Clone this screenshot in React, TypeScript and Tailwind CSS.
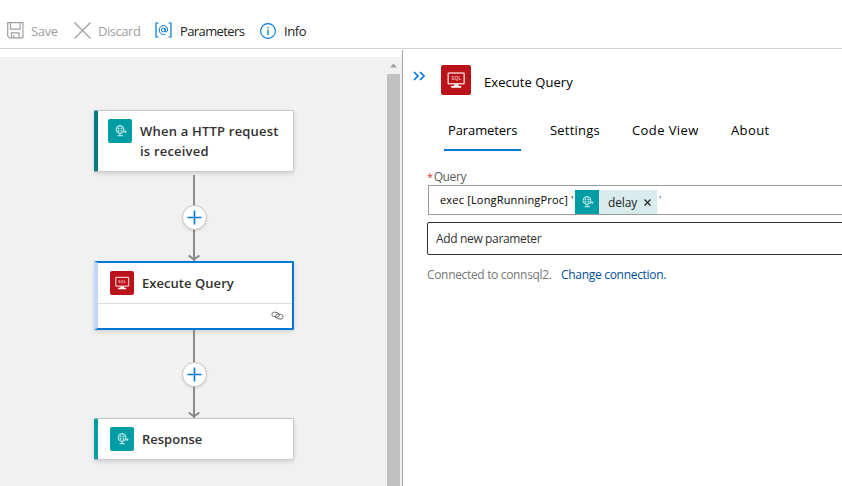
import React from "react";

function HttpIcon({ className }: { className: string }) {
  return (
    <span className={`flex shrink-0 items-center justify-center bg-[#009da5] ${className}`}>
      <svg width="24" height="24" viewBox="0 0 24 24" fill="none" stroke="#fff" strokeOpacity=".8">
        <circle cx="12" cy="10.500" r="4" strokeWidth=".9" />
        <ellipse cx="12" cy="10.500" rx="1.800" ry="4" strokeWidth=".6" />
        <path d="M8 9.300h8M8 11.800h8" strokeWidth=".6" />
        <path d="M15.500 12.700h3M17.300 11.600v2.200M12 14.500v2M9.500 16.700h5.500" strokeWidth="1.100" />
      </svg>
    </span>
  );
}

function SqlIcon({ className, size }: { className: string; size: number }) {
  return (
    <span className={`flex shrink-0 items-center justify-center rounded-[2px] bg-[#ba141a] ${className}`}>
      <svg width={size} height={size} viewBox="0 0 30 30">
        <rect x="7.200" y="8" width="16" height="10.800" rx=".8" fill="none" stroke="#f3c4c6" strokeWidth="1.500" />
        <path d="M13 19.300h4.500v1.700h2.700v1.700h-10v-1.700h2.800z" fill="#fff" />
        <text x="15.200" y="15.200" fontSize="5" fontWeight="700" textAnchor="middle" fill="#eea5a8" fontFamily="Open Sans, sans-serif">SQL</text>
      </svg>
    </span>
  );
}

function Connector({ className, buttonClassName }: { className: string; buttonClassName: string }) {
  return (
    <div className={`relative flex w-[200px] flex-col items-center ${className}`}>
      <div className="w-[2px] grow bg-[#8a8a88]" />
      <svg className="absolute bottom-0 left-[94px]" width="12" height="7" viewBox="0 0 12 7" fill="none" stroke="#8a8a88" strokeWidth="2">
        <path d="M.6 1.500l5.400 4 5.400-4" />
      </svg>
      <span className={`absolute left-[88px] flex size-[25px] items-center justify-center rounded-full border border-[#c8c8c8] bg-white shadow-[0_1px_3px_rgba(0,0,0,0.13)] ${buttonClassName}`}>
        <svg width="15" height="15" viewBox="0 0 15 15" stroke="#0078d4" strokeWidth="1.600">
          <path d="M7.500 .5v14M.5 7.500h14" />
        </svg>
      </span>
    </div>
  );
}

const cardShadow = "shadow-[0_2px_4px_rgba(0,0,0,0.13)]";

export default function App() {
  return (
    <div className="flex h-[486px] w-[842px] flex-col overflow-hidden bg-white font-['Open_Sans','Noto_Sans',sans-serif] text-[13px] whitespace-nowrap text-[#222]">
      <header className="flex h-[49px] shrink-0 items-center border-b border-[#d3d3d3] pt-[13px] pl-[7px]">
        <div className="flex w-[67px] items-center gap-[7px] text-[#a19f9d]">
          <svg width="17" height="17" viewBox="0 0 17 17" fill="none" stroke="currentColor" strokeWidth="1.200">
            <path d="M.7.7h15.200v15.200H2.500L.7 14zM3.500.7v6.500h9.600V.7M4.500 15.900v-5h7.500v5M7 13v3" />
          </svg>
          <span className="pt-[2px] tracking-[-0.35px]">Save</span>
        </div>
        <div className="flex w-[81px] items-center gap-[7px] text-[#a19f9d]">
          <svg width="17" height="17" viewBox="0 0 17 17" stroke="currentColor" strokeWidth="1.200">
            <path d="M.5.5l16 16M16.500.5l-16 16" />
          </svg>
          <span className="pt-[2px] tracking-[-0.45px]">Discard</span>
        </div>
        <div className="flex w-[105px] items-center gap-[8px]">
          <svg width="17" height="17" viewBox="0 0 17 17" fill="none" stroke="#0078d4">
            <path d="M3.500 1H1v14h2.500M13.500 1H16v14h-2.500" strokeWidth="1.200" />
            <circle cx="8.300" cy="8" r="1.900" />
            <path d="M10.300 5.800v3.400c0 1.400 2.300 1 2.300-1.400C12.600 5.300 10.800 3.500 8.500 3.500S4.200 5.500 4.200 8s1.800 4.500 4.300 4.500c.8 0 1.500-.2 2-.5" />
          </svg>
          <span className="pt-[2px] tracking-[-0.6px]">Parameters</span>
        </div>
        <div className="flex items-center gap-[8px]">
          <svg width="16" height="16" viewBox="0 0 16 16" fill="none" stroke="#0078d4">
            <circle cx="8" cy="8" r="7.400" strokeWidth="1.100" />
            <path d="M8 6.500v5.500M8 4v1.300" strokeWidth="1.300" />
          </svg>
          <span className="pt-[2px] tracking-[-0.4px]">Info</span>
        </div>
      </header>

      <div className="flex min-h-0 grow">
        <section className="mt-[8px] flex w-[402px] shrink-0 bg-[#f1f1f1]">
          <div className="flex w-[387px] flex-col pt-[53px] pl-[94px] text-[13px] font-semibold text-[#323130]">
            <div className={`flex h-[62px] w-[200px] shrink-0 rounded-[2px] border border-l-4 border-[#c8c8c8] border-l-[#007c84] bg-white pt-[8px] pl-[10px] ${cardShadow}`}>
              <HttpIcon className="size-[24px] rounded-[2px]" />
              <p className="mt-[2px] ml-[8px] leading-[20px] tracking-[0.2px]">When a HTTP request<br />is received</p>
            </div>
            <Connector className="h-[89px] pt-[3px]" buttonClassName="top-[33px]" />
            <div className={`flex h-[69px] w-[200px] shrink-0 flex-col rounded-[2px] border-2 border-l-4 border-[#0078d4] border-l-[#c3d5fc] bg-white ${cardShadow}`}>
              <div className="flex h-[41px] items-center border-b border-[#dcdcdc] pl-[12px]">
                <SqlIcon className="size-[24px]" size={24} />
                <span className="ml-[8px] pt-[2px] tracking-[0.05px]">Execute Query</span>
              </div>
              <div className="flex grow items-center justify-end pr-[8px]">
                <svg width="13" height="10" viewBox="0 0 13 10" fill="none" stroke="#666" strokeWidth=".9">
                  <rect x=".8" y="1.300" width="7.400" height="4.600" rx="2.300" transform="rotate(12 4 4)" />
                  <rect x="4.600" y="3.400" width="7.400" height="4.600" rx="2.300" transform="rotate(12 9 6)" />
                </svg>
              </div>
            </div>
            <Connector className="h-[88px]" buttonClassName="top-[32px]" />
            <div className={`flex h-[42px] w-[200px] shrink-0 items-center rounded-[2px] border border-l-4 border-[#c8c8c8] border-l-[#009da5] bg-white pl-[12px] ${cardShadow}`}>
              <HttpIcon className="size-[24px] rounded-[2px]" />
              <span className="ml-[8px] pt-[2px]">Response</span>
            </div>
          </div>
          <div className="flex w-[13px] flex-col items-center">
            <svg className="my-[6px] shrink-0" width="7" height="5" viewBox="0 0 7 5"><path d="M0 4.500L3.500.5 7 4.500z" fill="#a0a0a0" /></svg>
            <div className="w-full grow bg-[#c1c1c1]" />
          </div>
        </section>

        <section className="mt-px flex w-[440px] flex-col border-l border-[#a6a6a6] text-black">
          <div className="flex h-[60px] shrink-0 pl-[10px]">
            <svg className="mt-[21px]" width="13" height="10" viewBox="0 0 13 10" fill="none" stroke="#0078d4" strokeWidth="1.700">
              <path d="M1 1l4 4-4 4M7 1l4 4-4 4" />
            </svg>
            <SqlIcon className="mt-[15px] ml-[15px] size-[30px]" size={30} />
            <h1 className="mt-[22px] ml-[13px] leading-[20px] tracking-[0.05px]">Execute Query</h1>
          </div>
          <nav className="flex h-[41px] shrink-0 pt-[10px] pl-[41px] leading-[20px]">
            <div className="h-[31px] w-[77px] border-b-2 border-[#0078d4] pl-[4px] tracking-[-0.1px]">Parameters</div>
            <div className="ml-[29px] w-[82px] tracking-[0.2px]">Settings</div>
            <div className="w-[99px] tracking-[0.4px]">Code View</div>
            <div className="tracking-[0.4px]">About</div>
          </nav>
          <div className="flex grow flex-col pt-[18px] pl-[24px] text-[12px]">
            <label className="h-[16px] leading-[16px] tracking-[-0.4px] text-[#605e5c]"><span className="mr-[1px] text-[11px] text-[#d13438]">*</span>Query</label>
            <div className="ml-px flex h-[30px] w-[430px] border border-[#999] pt-[4px] pl-[11px] text-[11px]">
              <span className="w-[135px] leading-[20px] tracking-[0.18px]">exec [LongRunningProc] '</span>
              <span className="flex h-[24px] w-[82px] items-center bg-[#daebed]">
                <HttpIcon className="size-[24px]" />
                <span className="ml-[9px] w-[36px] pt-[2px] text-[12px] tracking-[-0.15px] text-[#222]">delay</span>
                <svg width="7" height="7" viewBox="0 0 7 7" stroke="#222" strokeWidth="1.200"><path d="M.5.5l6 6M6.500.5l-6 6" /></svg>
              </span>
              <span className="ml-[2px] leading-[20px] text-[#4a6080]">'</span>
            </div>
            <div className="mt-[7px] flex h-[33px] w-[430px] items-center rounded-[2px] border border-[#323130] pl-[8px] tracking-[-0.35px] text-[#323130]">Add new parameter</div>
            <div className="mt-[12px] flex leading-[16px] text-[#797775]">
              <span className="w-[134px] tracking-[-0.33px]">Connected to connsql2.</span>
              <a className="tracking-[-0.3px] text-[#004e9c]">Change connection.</a>
            </div>
          </div>
        </section>
      </div>
    </div>
  );
}
